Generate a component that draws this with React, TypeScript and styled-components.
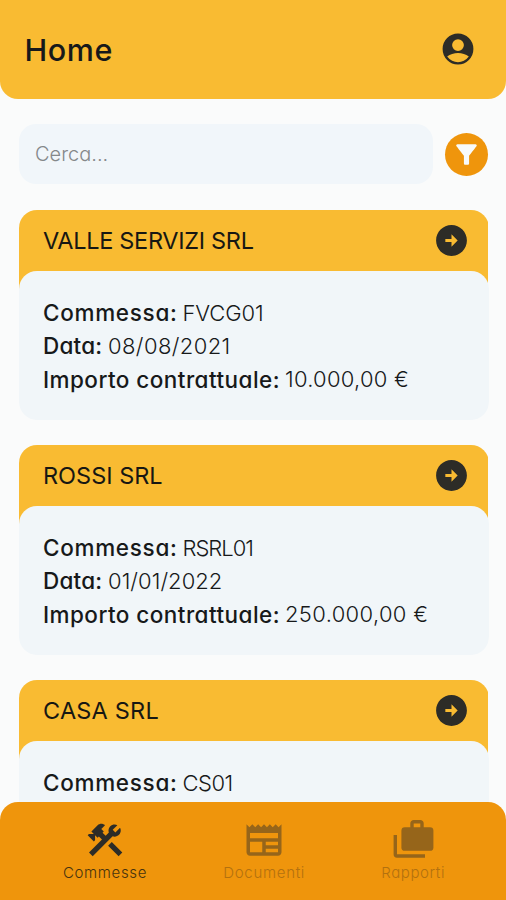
import React from "react";
import styled, { createGlobalStyle } from "styled-components";
import { MdArrowCircleRight, MdFilterAlt, MdNewspaper } from "react-icons/md";

const GlobalStyle = createGlobalStyle`
  * { box-sizing: border-box; }
  body {
    margin: 0;
    background: #fafbfb;
    color: #17191a;
    font-family: Inter, "Open Sans", sans-serif;
    font-feature-settings: "cv11";
    overflow: hidden;
  }
`;

const Screen = styled.div`
  display: flex;
  flex-direction: column;
  height: 900px;
  overflow: hidden;
`;

const Header = styled.header`
  display: flex;
  align-items: center;
  justify-content: space-between;
  flex: none;
  height: 99px;
  padding: 0 32px 1px 24.5px;
  border-radius: 0 0 18px 18px;
  background: #f9bb32;
`;

const Title = styled.h1`
  margin: 0;
  font-size: 30.5px;
  font-weight: 450;
  letter-spacing: 0.6px;
`;

const ProfileButton = styled.button`
  display: flex;
  padding: 0;
  border: 0;
  background: none;
  color: #2d2c27;
  svg { width: 32px; height: 32px; }
`;

const SearchRow = styled.div`
  display: flex;
  align-items: center;
  gap: 12px;
  flex: none;
  height: 60px;
  margin: 25px 18px 26px 19px;
`;

const SearchInput = styled.input`
  flex: 1;
  min-width: 0;
  height: 60px;
  padding: 0 16px;
  border: 0;
  border-radius: 17px;
  outline: 0;
  background: #f1f6fa;
  font: 300 20px Inter, sans-serif;
  font-feature-settings: "cv11";
  letter-spacing: 0;
  &::placeholder { color: #85888a; opacity: 1; }
`;

const FilterButton = styled.button`
  display: flex;
  align-items: center;
  justify-content: center;
  width: 43px;
  height: 43px;
  padding: 0;
  border: 0;
  border-radius: 50%;
  background: #ef950c;
  color: #f8fafa;
  font-size: 31px;
`;

const List = styled.main`
  display: flex;
  flex-direction: column;
  gap: 25px;
  padding: 0 17px 0 19px;
`;

const Card = styled.article`
  flex: none;
  height: 210px;
  border-radius: 18px;
  background: linear-gradient(#f9bb32 0 100px, transparent 100px);
  background-size: 469px 100%;
  background-repeat: no-repeat;
  overflow: hidden;
`;

const CardHeader = styled.div`
  display: flex;
  align-items: center;
  justify-content: space-between;
  height: 61px;
  padding: 0 19px 0 24px;
  color: #2d2c27;
  svg { font-size: 37px; }
`;

const CardTitle = styled.h2<{ $spacing: number }>`
  margin: 0;
  color: #171713;
  font-size: 23.5px;
  font-weight: 400;
  white-space: nowrap;
  letter-spacing: ${(p) => p.$spacing}px;
`;

const CardBody = styled.div`
  height: 149px;
  padding: 25px 24px 23px;
  border-radius: 18px;
  background: #f1f6f9;
`;

const Field = styled.div`
  display: flex;
  height: 33.3px;
  align-items: center;
  font-size: 22px;
  white-space: nowrap;
`;

const Label = styled.span<{ $width: number; $spacing: number }>`
  width: ${(p) => p.$width}px;
  font-size: 22.5px;
  font-weight: 500;
  letter-spacing: ${(p) => p.$spacing}px;
`;

const Value = styled.span<{ $spacing: number }>`
  font-weight: 300;
  letter-spacing: ${(p) => p.$spacing}px;
`;

const BottomNav = styled.nav`
  position: fixed;
  left: 0;
  bottom: 0;
  display: flex;
  justify-content: space-between;
  width: 506px;
  height: 98px;
  padding: 17px 61px 0 63px;
  border-radius: 18px 18px 0 0;
  background: #ef950c;
`;

const NavItem = styled.a<{ $active?: boolean }>`
  display: flex;
  flex-direction: column;
  align-items: center;
  color: ${(p) => (p.$active ? "#2d2c27" : "#96651a")};
  svg { width: 42px; height: 42px; overflow: visible; }
`;

const NavLabel = styled.span<{ $active?: boolean; $spacing: number }>`
  margin-top: 2px;
  color: ${(p) => (p.$active ? "#46330f" : "#b3710f")};
  font-size: 15px;
  font-weight: 300;
  line-height: 20px;
  letter-spacing: ${(p) => p.$spacing}px;
`;

function ProfileIcon() {
  return (
    <svg viewBox="0 0 32 32" fill="currentColor" fillRule="evenodd">
      <path d="M16 .6a15.4 15.4 0 1 0 0 30.8 15.4 15.4 0 0 0 0-30.8ZM16 6.2a5.9 5.9 0 1 1 0 11.8 5.9 5.9 0 0 1 0-11.8ZM5.2 23.6C8 21 12 19.9 16 19.9s8 1.1 10.8 3.7C24 27.4 20 29.2 16 29.2S8 27.4 5.2 23.6Z" />
    </svg>
  );
}

function ToolsIcon() {
  return (
    <svg viewBox="0 0 24 24" fill="currentColor">
      <path d="M13.78 15.3L19.78 21.3L21.89 19.14L15.89 13.14L13.78 15.3M17.5 10.1C17.11 10.1 16.69 10.05 16.36 9.91L4.97 21.25L2.86 19.14L10.27 11.74L8.5 9.96L7.78 10.66L6.33 9.25V12.11L5.63 12.81L2.11 9.25L2.81 8.55H5.62L4.22 7.14L7.78 3.58C8.95 2.41 10.83 2.41 12 3.58L9.89 5.74L11.3 7.14L10.59 7.85L12.38 9.63L14.2 7.75C14.06 7.42 14 7 14 6.63C14 4.66 15.56 3.11 17.5 3.11C18.09 3.11 18.61 3.25 19.08 3.53L16.41 6.2L17.91 7.7L20.58 5.03C20.86 5.5 21 6 21 6.63C21 8.55 19.45 10.1 17.5 10.1Z" />
    </svg>
  );
}

function CasesIcon() {
  return (
    <svg viewBox="0 0 42 42" fill="none" stroke="currentColor" strokeWidth="3.4">
      <path d="M3.3 16v19.3a1.7 1.7 0 0 0 1.7 1.7h28" />
      <path d="M20 9V4.4a1.7 1.7 0 0 1 1.7-1.7h6.6A1.7 1.7 0 0 1 30 4.4V9" />
      <rect x="9.4" y="8.3" width="32" height="23.5" rx="3.4" fill="currentColor" stroke="none" />
    </svg>
  );
}

type Entry = { text: string; spacing: number };
type Job = { client: Entry; code: Entry; date: Entry; amount: Entry };

const jobs: Job[] = [
  {
    client: { text: "VALLE SERVIZI SRL", spacing: -0.3 },
    code: { text: "FVCG01", spacing: -0.1 },
    date: { text: "08/08/2021", spacing: 0.4 },
    amount: { text: "10.000,00 €", spacing: 0.25 },
  },
  {
    client: { text: "ROSSI SRL", spacing: 0 },
    code: { text: "RSRL01", spacing: -1 },
    date: { text: "01/01/2022", spacing: 0.05 },
    amount: { text: "250.000,00 €", spacing: 0.35 },
  },
  {
    client: { text: "CASA SRL", spacing: 0.2 },
    code: { text: "CS01", spacing: -0.5 },
    date: { text: "01/02/2022", spacing: 0 },
    amount: { text: "50.000,00 €", spacing: 0.25 },
  },
];

function JobCard({ job }: { job: Job }) {
  return (
    <Card>
      <CardHeader>
        <CardTitle $spacing={job.client.spacing}>{job.client.text}</CardTitle>
        <MdArrowCircleRight />
      </CardHeader>
      <CardBody>
        <Field>
          <Label $width={139.5} $spacing={0.7}>Commessa:</Label>
          <Value $spacing={job.code.spacing}>{job.code.text}</Value>
        </Field>
        <Field>
          <Label $width={65} $spacing={0.2}>Data:</Label>
          <Value $spacing={job.date.spacing}>{job.date.text}</Value>
        </Field>
        <Field>
          <Label $width={242} $spacing={0.45}>Importo contrattuale:</Label>
          <Value $spacing={job.amount.spacing}>{job.amount.text}</Value>
        </Field>
      </CardBody>
    </Card>
  );
}

export default function App() {
  return (
    <Screen>
      <GlobalStyle />
      <Header>
        <Title>Home</Title>
        <ProfileButton aria-label="Profilo"><ProfileIcon /></ProfileButton>
      </Header>
      <SearchRow>
        <SearchInput placeholder="Cerca..." />
        <FilterButton aria-label="Filtra"><MdFilterAlt /></FilterButton>
      </SearchRow>
      <List>
        {jobs.map((job) => <JobCard key={job.code.text} job={job} />)}
      </List>
      <BottomNav>
        <NavItem $active>
          <ToolsIcon />
          <NavLabel $active $spacing={0.65}>Commesse</NavLabel>
        </NavItem>
        <NavItem>
          <MdNewspaper />
          <NavLabel $spacing={0.7}>Documenti</NavLabel>
        </NavItem>
        <NavItem>
          <CasesIcon />
          <NavLabel $spacing={0.6}>Rapporti</NavLabel>
        </NavItem>
      </BottomNav>
    </Screen>
  );
}
